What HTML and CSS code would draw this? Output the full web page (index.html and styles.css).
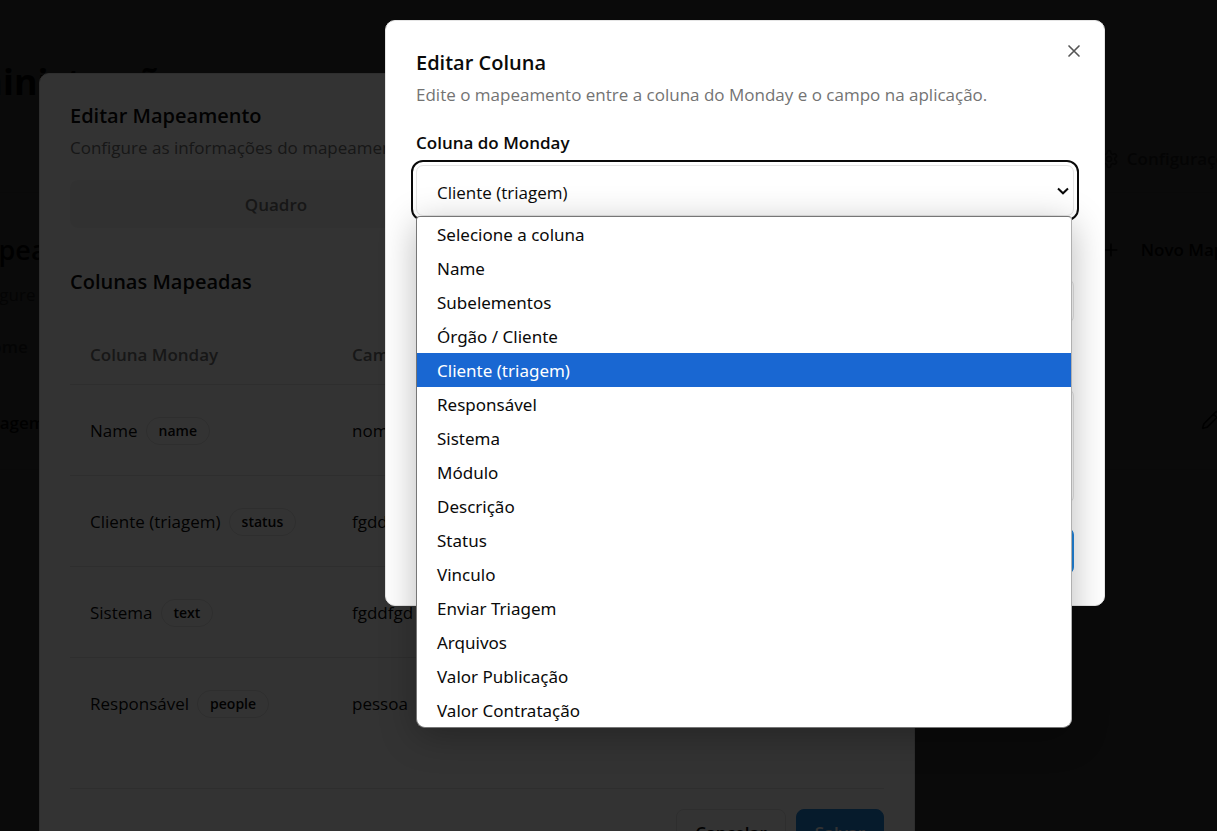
FILE: index.html
```html
<!DOCTYPE html>
<html lang="pt-BR">
<head>
<meta charset="utf-8">
<title>Editar Coluna</title>
<link rel="stylesheet" href="styles.css">
</head>
<body>
<main class="page">
  <h1 class="page-title">Administração</h1>
  <nav class="page-tabs">
    <button class="page-tab" type="button">
      <svg class="icon" viewBox="0 0 24 24"><path d="M12.22 2h-.44a2 2 0 0 0-2 2v.18a2 2 0 0 1-1 1.73l-.43.25a2 2 0 0 1-2 0l-.15-.08a2 2 0 0 0-2.73.73l-.22.38a2 2 0 0 0 .73 2.73l.15.1a2 2 0 0 1 1 1.72v.51a2 2 0 0 1-1 1.74l-.15.09a2 2 0 0 0-.73 2.73l.22.38a2 2 0 0 0 2.73.73l.15-.08a2 2 0 0 1 2 0l.43.25a2 2 0 0 1 1 1.73V20a2 2 0 0 0 2 2h.44a2 2 0 0 0 2-2v-.18a2 2 0 0 1 1-1.73l.43-.25a2 2 0 0 1 2 0l.15.08a2 2 0 0 0 2.73-.73l.22-.39a2 2 0 0 0-.73-2.73l-.15-.08a2 2 0 0 1-1-1.74v-.5a2 2 0 0 1 1-1.74l.15-.09a2 2 0 0 0 .73-2.73l-.22-.38a2 2 0 0 0-2.73-.73l-.15.08a2 2 0 0 1-2 0l-.43-.25a2 2 0 0 1-1-1.73V4a2 2 0 0 0-2-2z"/><circle cx="12" cy="12" r="3"/></svg>
      Configurações
    </button>
  </nav>
  <section class="card">
    <div class="card-head">
      <h2 class="card-title">Mapeamentos</h2>
      <button class="new-button" type="button">
        <svg class="icon" viewBox="0 0 24 24"><path d="M5 12h14M12 5v14"/></svg>
        Novo Mapeamento
      </button>
    </div>
    <p class="card-text">Configure</p>
    <table class="list">
      <thead><tr><th>Nome</th><td></td></tr></thead>
      <tbody><tr><td>Triagem</td><td class="list-action"><button class="icon-button" type="button" aria-label="Editar"><svg class="icon" viewBox="0 0 24 24"><path d="M21.17 6.81a1 1 0 0 0-3.98-3.98L3.84 16.17a2 2 0 0 0-.5.83l-1.32 4.35a.5.5 0 0 0 .62.62l4.35-1.32a2 2 0 0 0 .83-.5zM15 5l4 4"/></svg></button></td></tr></tbody>
    </table>
  </section>
</main>

<div class="overlay"></div>
<section class="dialog dialog-mapping" role="dialog" aria-labelledby="mapping-title">
  <h2 class="dialog-title" id="mapping-title">Editar Mapeamento</h2>
  <p class="dialog-text">Configure as informações do mapeamento</p>
  <div class="tabs"><button class="tab" type="button">Quadro</button></div>
  <h3 class="dialog-title columns-title">Colunas Mapeadas</h3>
  <table class="columns">
    <thead><tr><th>Coluna Monday</th><th>Campo</th></tr></thead>
    <tbody>
      <tr><td><div class="cell">Name <span class="badge">name</span></div></td><td>nome</td></tr>
      <tr><td><div class="cell">Cliente (triagem) <span class="badge">status</span></div></td><td>fgddfgd</td></tr>
      <tr><td><div class="cell">Sistema <span class="badge">text</span></div></td><td>fgddfgd</td></tr>
      <tr><td><div class="cell">Responsável <span class="badge">people</span></div></td><td>pessoa</td></tr>
    </tbody>
  </table>
  <footer class="dialog-footer">
    <button class="button" type="button">Cancelar</button>
    <button class="button button-primary" type="button">Salvar</button>
  </footer>
</section>

<div class="overlay"></div>
<section class="dialog dialog-column" role="dialog" aria-labelledby="column-title">
  <button class="close" type="button" aria-label="Fechar"><svg class="icon" viewBox="0 0 24 24"><path d="M18 6 6 18M6 6l12 12"/></svg></button>
  <h2 class="dialog-title" id="column-title">Editar Coluna</h2>
  <p class="dialog-text">Edite o mapeamento entre a coluna do Monday e o campo na aplicação.</p>
  <form class="form">
    <label class="label" for="column">Coluna do Monday</label>
    <div class="select-wrap">
      <select class="select" id="column"><option>Cliente (triagem)</option></select>
      <svg class="chevron" viewBox="0 0 12 8"><path d="M1 1.5 6 6.3l5-4.8"/></svg>
      <ul class="menu" role="listbox" aria-label="Coluna do Monday">
        <li class="option" role="option">Selecione a coluna</li>
        <li class="option" role="option">Name</li>
        <li class="option" role="option">Subelementos</li>
        <li class="option" role="option">Órgão / Cliente</li>
        <li class="option option-active" role="option" aria-selected="true">Cliente (triagem)</li>
        <li class="option" role="option">Responsável</li>
        <li class="option" role="option">Sistema</li>
        <li class="option" role="option">Módulo</li>
        <li class="option" role="option">Descrição</li>
        <li class="option" role="option">Status</li>
        <li class="option" role="option">Vinculo</li>
        <li class="option" role="option">Enviar Triagem</li>
        <li class="option" role="option">Arquivos</li>
        <li class="option" role="option">Valor Publicação</li>
        <li class="option" role="option">Valor Contratação</li>
      </ul>
    </div>
    <input class="field" type="text" aria-label="Campo">
    <textarea class="field field-area" aria-label="Descrição"></textarea>
    <button class="button button-primary submit" type="button" aria-label="Salvar"></button>
  </form>
</section>
</body>
</html>
```
FILE: styles.css
```css
* { box-sizing: border-box; }

body {
  margin: 0;
  height: 100vh;
  overflow: hidden;
  position: relative;
  background: #fff;
  color: #0a0a0a;
  font: 17px/24px "Open Sans", "Noto Sans", sans-serif;
}

h1, h2, h3, p, ul { margin: 0; padding: 0; }
button, input, select, textarea { font: inherit; color: inherit; }
button { border: 0; background: none; padding: 0; }
table { border-collapse: collapse; width: 100%; }
th, td { padding: 0 20px; text-align: left; font-weight: 400; }
.icon {
  width: 20px;
  height: 20px;
  flex: none;
  fill: none;
  stroke: currentColor;
  stroke-width: 2;
  stroke-linecap: round;
  stroke-linejoin: round;
}

/* Page behind the dialogs */
.page { margin: 0 -123px 0 -80px; padding-top: 58px; }
.page-title { font-size: 36px; line-height: 48px; font-weight: 700; }
.page-tabs {
  display: flex;
  justify-content: flex-end;
  margin-top: 24px;
  padding: 17px 96px 21px 0;
}
.page-tab, .new-button { display: flex; align-items: center; font-weight: 600; }
.page-tab { gap: 8px; color: #737373; }
.card { border-top: 1px solid #e5e5e5; padding: 32px 34px 0 38px; }
.card-head { display: flex; justify-content: space-between; align-items: center; height: 50px; }
.card-title { font-size: 27px; font-weight: 600; }
.new-button { gap: 20px; padding: 0 8px; font-weight: 600; }
.card-text { margin-top: 8px; color: #737373; }
.list { margin-top: 10px; }
.list th { height: 60px; color: #737373; font-weight: 600; }
.list tbody td { height: 92px; font-weight: 600; border-bottom: 1px solid #e5e5e5; }
.list-action .icon-button { display: block; margin: 0 65px 0 auto; }

.overlay { position: absolute; inset: 0; background: rgba(0, 0, 0, 0.8); }

/* Dialogs */
.dialog {
  position: absolute;
  padding: 30px;
  background: #fff;
  border: 1px solid #e5e5e5;
  border-radius: 10px;
}
.dialog-mapping { left: 39px; top: 73px; width: 876px; min-height: 800px; }
.dialog-column { left: 385px; top: 20px; width: 720px; }
.dialog-title { font-size: 20px; line-height: 24px; font-weight: 600; }
.dialog-text { margin-top: 8px; color: #737373; }

.tabs {
  display: grid;
  grid-template-columns: 1fr 1fr;
  margin-top: 20px;
  padding: 7px 5px 5px;
  height: 48px;
  border-radius: 8px;
  background: #f5f5f5;
}
.tab { font-weight: 600; color: #737373; }
.columns-title { margin-top: 42px; }
.columns { margin-top: 30px; table-layout: fixed; }
.columns th { height: 60px; padding-top: 2px; font-weight: 600; color: #737373; }
.columns th:first-child { width: 262px; }
.columns td { height: 91px; padding-top: 2px; }
.columns tr { border-bottom: 1px solid #e5e5e5; }
.columns tbody tr:last-child { border-bottom: 0; }
.cell { display: flex; align-items: center; gap: 8px; white-space: nowrap; }
.badge {
  padding: 1px 12px;
  border: 1px solid #e5e5e5;
  border-radius: 14px;
  font-size: 14px;
  font-weight: 600;
}
.dialog-footer {
  display: flex;
  justify-content: flex-end;
  gap: 10px;
  margin-top: 40px;
  padding-top: 20px;
  border-top: 1px solid #e5e5e5;
}
.button {
  height: 48px;
  padding: 0 18px;
  border: 1px solid #e5e5e5;
  border-radius: 8px;
  font-weight: 600;
}
.button-primary { background: #2185dc; border-color: #2185dc; color: #fafafa; }

.close { position: absolute; top: 20px; right: 20px; display: flex; color: #555; }

.form { display: flex; flex-direction: column; margin-top: 24px; }
.label { font-weight: 600; }
.select-wrap { position: relative; margin-top: 10px; }
.select {
  display: block;
  width: 100%;
  height: 51px;
  padding: 4px 20px 0;
  appearance: none;
  background: #fff;
  border: 1px solid #e5e5e5;
  border-radius: 7px;
  outline: 2px solid #0a0a0a;
  outline-offset: 3px;
}
.chevron {
  position: absolute;
  top: 22px;
  right: 5px;
  width: 12px;
  height: 8px;
  fill: none;
  stroke: #0a0a0a;
  stroke-width: 2;
}
.menu {
  position: absolute;
  z-index: 1;
  top: 51px;
  left: 0;
  right: 2px;
  list-style: none;
  overflow: hidden;
  background: #fff;
  border: 1px solid #767676;
  border-right-color: #b0b0b0;
  border-radius: 4px 4px 9px 9px;
  box-shadow: 0 8px 36px rgba(0, 0, 0, 0.28);
  font-family: "Noto Sans", "Open Sans", sans-serif;
}
.option { height: 34px; padding: 1px 20px 0; line-height: 34px; }
.option-active { background: #1967d2; color: #fff; }
.field {
  width: 100%;
  height: 46px;
  margin-top: 62px;
  border: 1px solid #e5e5e5;
  border-radius: 8px;
}
.field-area { height: 116px; margin-top: 64px; resize: none; }
.submit { align-self: flex-end; width: 90px; margin-top: 23px; }
```
